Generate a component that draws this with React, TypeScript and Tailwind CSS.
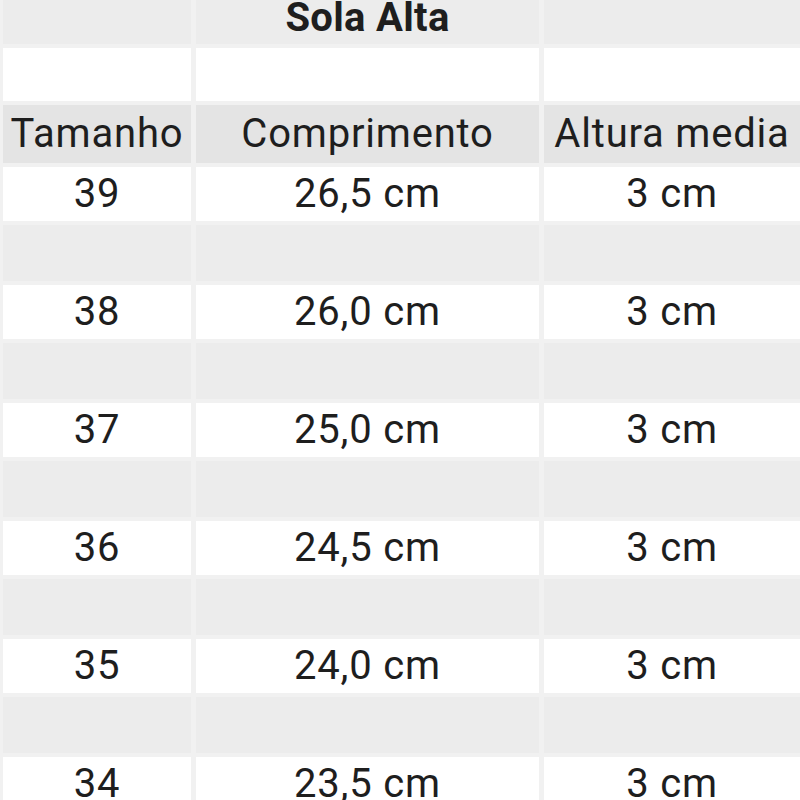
const sizes = [
    { size: "39", length: "26,5 cm", height: "3 cm" },
    { size: "38", length: "26,0 cm", height: "3 cm" },
    { size: "37", length: "25,0 cm", height: "3 cm" },
    { size: "36", length: "24,5 cm", height: "3 cm" },
    { size: "35", length: "24,0 cm", height: "3 cm" },
    { size: "34", length: "23,5 cm", height: "3 cm" },
];

const cell = "flex items-center justify-center leading-none tracking-[0.8px]";

export default function App() {
    return (
        <div className="w-[800px] h-[800px] overflow-hidden bg-[#f1f1f1] font-['Roboto',sans-serif] text-[40px] text-[#1e1e1e]">
            <div className="grid grid-cols-[188px_343px_1fr] gap-x-[5px] gap-y-[4px] pl-[3px]">
                {/* title row */}
                <div className="h-[44px] bg-[#ececec]" />
                <div className="h-[44px] bg-[#ececec] flex justify-center items-start">
                    <span className="-mt-[2px] leading-none font-bold tracking-[0.3px]">Sola Alta</span>
                </div>
                <div className="h-[44px] bg-[#ececec]" />

                {/* blank row */}
                <div className="h-[53px] bg-white" />
                <div className="h-[53px] bg-white" />
                <div className="h-[53px] bg-white" />

                {/* header */}
                <div className={`${cell} h-[58px] bg-[#e4e4e4]`}>Tamanho</div>
                <div className={`${cell} h-[58px] bg-[#e4e4e4]`}>Comprimento</div>
                <div className={`${cell} h-[58px] bg-[#e4e4e4]`}>Altura media</div>

                {sizes.map((row, i) => (
                    <div key={row.size} className="contents">
                        <div className={`${cell} h-[54px] bg-white`}>{row.size}</div>
                        <div className={`${cell} h-[54px] bg-white`}>{row.length}</div>
                        <div className={`${cell} h-[54px] bg-white`}>{row.height}</div>
                        {i < sizes.length - 1 && (
                            <>
                                <div className="h-[56px] bg-[#ececec]" />
                                <div className="h-[56px] bg-[#ececec]" />
                                <div className="h-[56px] bg-[#ececec]" />
                            </>
                        )}
                    </div>
                ))}
            </div>
        </div>
    );
}
